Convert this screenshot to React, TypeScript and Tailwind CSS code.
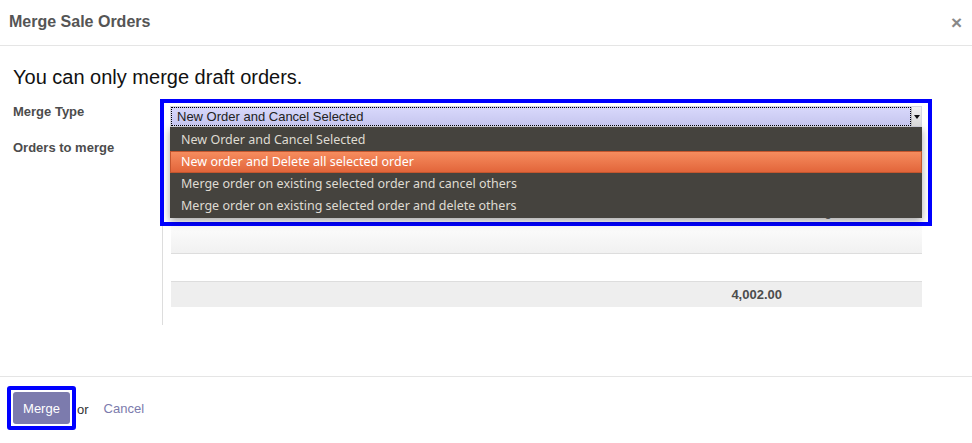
import React from "react";

const options = [
  "New Order and Cancel Selected",
  "New order and Delete all selected order",
  "Merge order on existing selected order and cancel others",
  "Merge order on existing selected order and delete others",
];

export default function App() {
  const active = 1;

  return (
    <div className="w-[972px] h-[443px] bg-white overflow-hidden font-['Liberation_Sans',Arial,sans-serif] text-[13px] text-[#333]">
      {/* header */}
      <div className="h-[46px] border-b border-[#e5e5e5] flex items-center justify-between pl-[9px] pr-[10px]">
        <h4 className="text-[16px] font-bold text-[#555] leading-[20px] -mt-[1px]">Merge Sale Orders</h4>
        <span className="text-[19px] font-bold text-[#888] leading-none">×</span>
      </div>

      {/* body */}
      <div className="h-[330px] pt-[19px] pl-[13px]">
        <h2 className="text-[20px] leading-[24px] text-[#111] font-normal">You can only merge draft orders.</h2>

        <div className="mt-[10px] flex">
          <div className="w-[147px] font-bold text-[#4c4c4c] leading-[16px]">
            <div className="h-[36px] pt-[5px]">Merge Type</div>
            <div className="pt-[5px]">Orders to merge</div>
          </div>

          <div className="w-[772px]">
            <div className="relative h-[36px]">
              {/* highlighted select with its open list */}
              <div className="absolute left-0 top-0 w-[772px] h-[127px] border-4 border-[#0000ff] z-10 pt-[3px] pl-[6px] pr-[6px]">
                <div className="h-[21px] flex border border-[#d6d6e0] bg-white">
                  <div className="flex-1 border border-dotted border-black bg-gradient-to-b from-[#d8d8fb] to-[#c6c6ef] pl-[5px] leading-[17px] text-[#222]">
                    New Order and Cancel Selected
                  </div>
                  <div className="w-[10px] bg-gradient-to-b from-[#f2f2f2] to-[#d8d8d8] border-l border-[#bbb] flex items-center justify-center">
                    <svg width="6" height="4" viewBox="0 0 6 4"><path d="M0 0h6L3 4z" fill="#111" /></svg>
                  </div>
                </div>
                <div className="h-[91px] bg-[#45433e] py-[2px] shadow-[0_3px_8px_rgba(0,0,0,0.35)] font-['Noto_Sans',sans-serif] text-[12.5px]">
                  {options.map((o, i) => (
                    <div
                      key={o}
                      className={
                        i === active
                          ? "h-[22px] leading-[20px] pl-[10px] text-white bg-gradient-to-b from-[#f68c5e] to-[#e2653a] border border-[#c4562e]"
                          : "h-[22px] leading-[22px] pl-[11px] text-[#dfdbd2]"
                      }
                    >
                      {o}
                    </div>
                  ))}
                </div>
              </div>
            </div>

            {/* orders list, mostly under the open list */}
            <div className="h-[190px] ml-[2px] border-l border-[#ddd] pl-[8px]">
              <div className="w-[751px] text-[#555]">
                <div className="h-[119px] border-b border-[#ddd] bg-gradient-to-b from-white from-70% to-[#f1f1f1]">
                  <div className="flex pt-[69px] leading-[16px]">
                    <span className="ml-[519px] w-[94px]">Jun 12, 2016</span>
                    <span className="w-[80px]">Pending</span>
                  </div>
                </div>
                <div className="h-[28px] border-b border-[#ddd]"></div>
                <div className="h-[25px] bg-[#eee] flex items-center justify-end pr-[140px] pt-[1px] font-bold text-[#4c4c4c]">4,002.00</div>
              </div>
            </div>
          </div>
        </div>
      </div>

      {/* footer */}
      <div className="border-t border-[#e5e5e5] pt-[9px] pl-[7px] flex items-center">
        <div className="border-4 border-[#0000ff] rounded-[3px] p-[2px]">
          <button className="w-[57px] h-[32px] rounded-[3px] bg-[#7c7bad] text-white text-[13px] pt-[1px]">Merge</button>
        </div>
        <span className="ml-[1px] mt-[4px] text-[#333]">or</span>
        <a className="ml-[15px] mt-[2px] text-[#7c7bad]">Cancel</a>
      </div>
    </div>
  );
}
